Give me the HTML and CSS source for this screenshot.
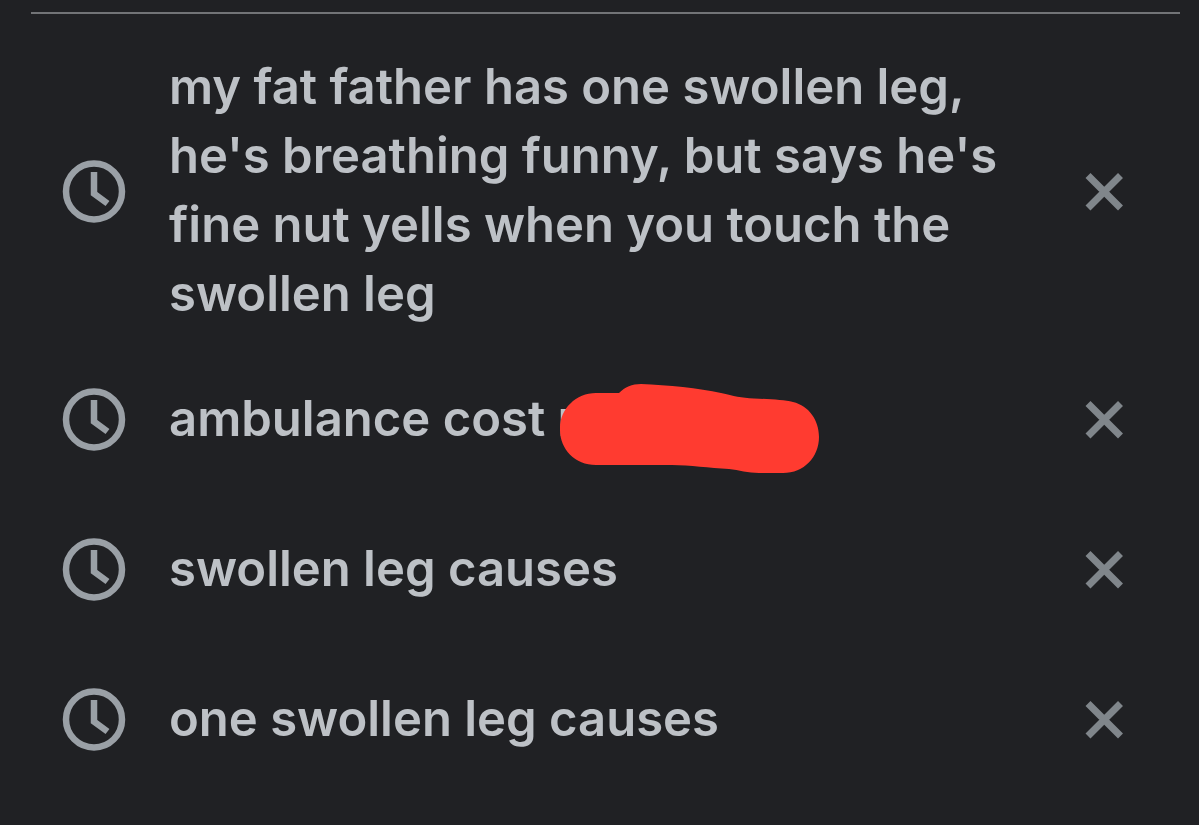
FILE: index.html
```html
<!DOCTYPE html>
<html lang="en">
<head>
<meta charset="utf-8">
<meta name="viewport" content="width=device-width, initial-scale=1">
<title>Search history</title>
<link rel="stylesheet" href="styles.css">
</head>
<body>
<svg class="symbols" aria-hidden="true">
  <symbol id="clock" viewBox="0 0 64 64">
    <circle cx="32" cy="32.5" r="28" fill="none" stroke="currentColor" stroke-width="6.500"/>
    <path d="M32 13V34.500L45.500 44.500" fill="none" stroke="currentColor" stroke-width="6.500"/>
  </symbol>
  <symbol id="cross" viewBox="0 0 40 40">
    <path d="M4 4.500L36.500 37M36.500 4.500L4 37" fill="none" stroke="currentColor" stroke-width="7"/>
  </symbol>
</svg>
<main class="panel">
  <hr class="divider">
  <ul class="history">
    <li class="item">
      <svg class="clock" aria-hidden="true"><use href="#clock"/></svg>
      <a class="query" href="#">my fat father has one swollen leg, he's breathing funny, but says he's fine nut yells when you touch the swollen leg</a>
      <button class="remove" type="button" aria-label="Remove"><svg class="cross" aria-hidden="true"><use href="#cross"/></svg></button>
    </li>
    <li class="item">
      <svg class="clock" aria-hidden="true"><use href="#clock"/></svg>
      <a class="query" href="#">ambulance cost r<svg class="redaction" viewBox="0 0 260 90" aria-hidden="true"><path d="M36 9H59C65 3 72 0 81 0C108 1 139 4 161 9C174 12 181 14 194 14.500C211 15 224 16 233 18C249 22 259 36 259 53C259 73 244 89 223 89H199C188 89 179 86 169 85C149 84 130 81 112 81H36C15 81 0 65 0 46V44C0 25 16 9 36 9Z" fill="currentColor"/></svg></a>
      <button class="remove" type="button" aria-label="Remove"><svg class="cross" aria-hidden="true"><use href="#cross"/></svg></button>
    </li>
    <li class="item">
      <svg class="clock" aria-hidden="true"><use href="#clock"/></svg>
      <a class="query" href="#">swollen leg causes</a>
      <button class="remove" type="button" aria-label="Remove"><svg class="cross" aria-hidden="true"><use href="#cross"/></svg></button>
    </li>
    <li class="item">
      <svg class="clock" aria-hidden="true"><use href="#clock"/></svg>
      <a class="query" href="#">one swollen leg causes</a>
      <button class="remove" type="button" aria-label="Remove"><svg class="cross" aria-hidden="true"><use href="#cross"/></svg></button>
    </li>
  </ul>
</main>
</body>
</html>
```
FILE: styles.css
```css
* {
  box-sizing: border-box;
}

body {
  margin: 0;
  background: #202124;
  color: #bdc1c6;
  font-family: Inter, "Open Sans", sans-serif;
}

.symbols {
  display: none;
}

.panel {
  padding-top: 12px;
}

.divider {
  height: 2px;
  margin: 0 19px 24px 31px;
  border: 0;
  background: #727477;
}

.history {
  margin: 0;
  padding: 0;
  list-style: none;
}

.item {
  display: flex;
  align-items: center;
  min-height: 150px;
  padding: 14px 75px 14px 62px;
}

.clock {
  flex: none;
  width: 64px;
  height: 64px;
  margin-right: 43px;
  color: #9aa0a6;
}

.query {
  position: relative;
  flex: 1;
  margin-right: 80px;
  padding-bottom: 2px;
  color: inherit;
  font-size: 49px;
  font-weight: 600;
  line-height: 69px;
  text-decoration: none;
}

.redaction {
  position: absolute;
  top: 0;
  left: 391px;
  width: 260px;
  height: 90px;
  color: #ff3b30;
}

.remove {
  display: flex;
  flex: none;
  padding: 0;
  border: 0;
  background: none;
  color: #80868b;
  cursor: pointer;
}

.cross {
  width: 40px;
  height: 40px;
}
```
